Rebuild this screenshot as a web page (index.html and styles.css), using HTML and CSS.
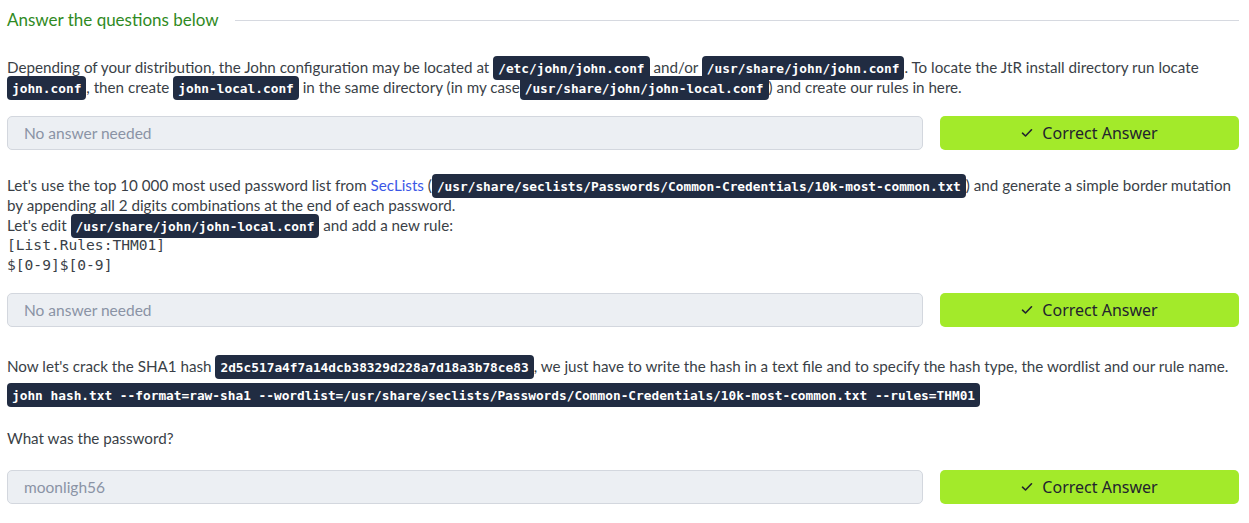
FILE: index.html
```html
<!DOCTYPE html>
<html lang="en">
<head>
<meta charset="utf-8">
<title>Answer the questions below</title>
<link rel="stylesheet" href="styles.css">
</head>
<body>
<div class="page">
  <div class="heading">
    <h2 class="heading-title">Answer the questions below</h2>
    <div class="heading-rule"></div>
  </div>

  <section class="question q1">
    <p class="text">Depending of your distribution, the John configuration may be located at <code class="code">/etc/john/john.conf</code> and/or <code class="code">/usr/share/john/john.conf</code>. To locate the JtR install directory run locate <code class="code">john.conf</code>, then create <code class="code">john-local.conf</code> in the same directory (in my case<code class="code">/usr/share/john/john-local.conf</code>) and create our rules in here.</p>
    <div class="answer-row">
      <div class="answer placeholder">No answer needed</div>
      <button class="correct"><svg class="check" width="12" height="10" viewBox="0 0 12 10"><polyline points="1.5,5.2 4.5,8 10.5,1.8" fill="none" stroke="#22232e" stroke-width="1.6" stroke-linecap="round" stroke-linejoin="round"/></svg>Correct Answer</button>
    </div>
  </section>

  <section class="question q2">
    <p class="text">Let's use the top 10 000 most used password list from <a class="link" href="#">SecLists</a> (<code class="code">/usr/share/seclists/Passwords/Common-Credentials/10k-most-common.txt</code>) and generate a simple border mutation by appending all 2 digits combinations at the end of each password.<br>Let's edit <code class="code">/usr/share/john/john-local.conf</code> and add a new rule:</p>
    <pre class="rule-block">[List.Rules:THM01]
$[0-9]$[0-9]</pre>
    <div class="answer-row">
      <div class="answer placeholder">No answer needed</div>
      <button class="correct"><svg class="check" width="12" height="10" viewBox="0 0 12 10"><polyline points="1.5,5.2 4.5,8 10.5,1.8" fill="none" stroke="#22232e" stroke-width="1.6" stroke-linecap="round" stroke-linejoin="round"/></svg>Correct Answer</button>
    </div>
  </section>

  <section class="question q3">
    <p class="text">Now let's crack the SHA1 hash <code class="code">2d5c517a4f7a14dcb38329d228a7d18a3b78ce83</code>, we just have to write the hash in a text file and to specify the hash type, the wordlist and our rule name.</p>
    <p class="text cmd-line"><code class="code cmd">john hash.txt --format=raw-sha1 --wordlist=/usr/share/seclists/Passwords/Common-Credentials/10k-most-common.txt --rules=THM01</code></p>
    <p class="text ask">What was the password?</p>
    <div class="answer-row">
      <div class="answer filled">moonligh56</div>
      <button class="correct"><svg class="check" width="12" height="10" viewBox="0 0 12 10"><polyline points="1.5,5.2 4.5,8 10.5,1.8" fill="none" stroke="#22232e" stroke-width="1.6" stroke-linecap="round" stroke-linejoin="round"/></svg>Correct Answer</button>
    </div>
  </section>
</div>
</body>
</html>
```

FILE: styles.css
```css
* { box-sizing: border-box; }

html, body {
  margin: 0;
  padding: 0;
  background: #ffffff;
}

body {
  font-family: "Source Sans Pro", Lato, "Noto Sans", sans-serif;
  font-size: 15.2px;
  color: #3a3f47;
}

.page {
  padding: 0 10px 0 7px;
  width: 1249px;
}

.heading {
  display: flex;
  align-items: center;
  gap: 16px;
  height: 20px;
  margin-top: 10px;
}

.heading-title {
  margin: 0;
  font-weight: 400;
  font-size: 17px;
  color: #2f8a23;
  white-space: nowrap;
  line-height: 20px;
}

.heading-rule {
  flex: 1;
  height: 1px;
  background: #d6d9e0;
}

.text {
  margin: 0;
  line-height: 20px;
}

.q1 .text { margin-top: 27px; }
.q2 { margin-top: 25px; }
.q3 { margin-top: 29px; }

.code {
  font-family: "DejaVu Sans Mono", "Liberation Mono", monospace;
  font-weight: 700;
  font-size: 12.8px;
  line-height: 14px;
  background: #212c42;
  color: #ffffff;
  padding: 5px 5px 4px;
  border-radius: 4px;
}

.link {
  color: #3b57e6;
  text-decoration: none;
}

.rule-block {
  margin: 0;
  font-family: "DejaVu Sans Mono", "Liberation Mono", monospace;
  font-size: 14.6px;
  line-height: 20px;
  color: #3a3f47;
}

.cmd-line {
  margin-top: 8px;
}

.ask {
  margin-top: 24px;
}

.answer-row {
  display: flex;
  gap: 17px;
  margin-top: 19px;
  height: 34px;
}

.q2 .answer-row { margin-top: 18px; }
.q3 .answer-row { margin-top: 22px; }

.answer {
  flex: 1;
  background: #eceff3;
  border: 1px solid #d3d7de;
  border-radius: 5px;
  padding: 0 16px;
  display: flex;
  align-items: center;
  color: #8a93a5;
  font-size: 15.5px;
}

.correct {
  width: 299px;
  border: none;
  border-radius: 5px;
  background: #a3ea2a;
  color: #22232e;
  font-family: "Noto Sans", "Open Sans", sans-serif;
  font-size: 16px;
  display: flex;
  align-items: center;
  justify-content: center;
  gap: 9px;
  padding: 0;
}

.check {
  display: block;
}
```
